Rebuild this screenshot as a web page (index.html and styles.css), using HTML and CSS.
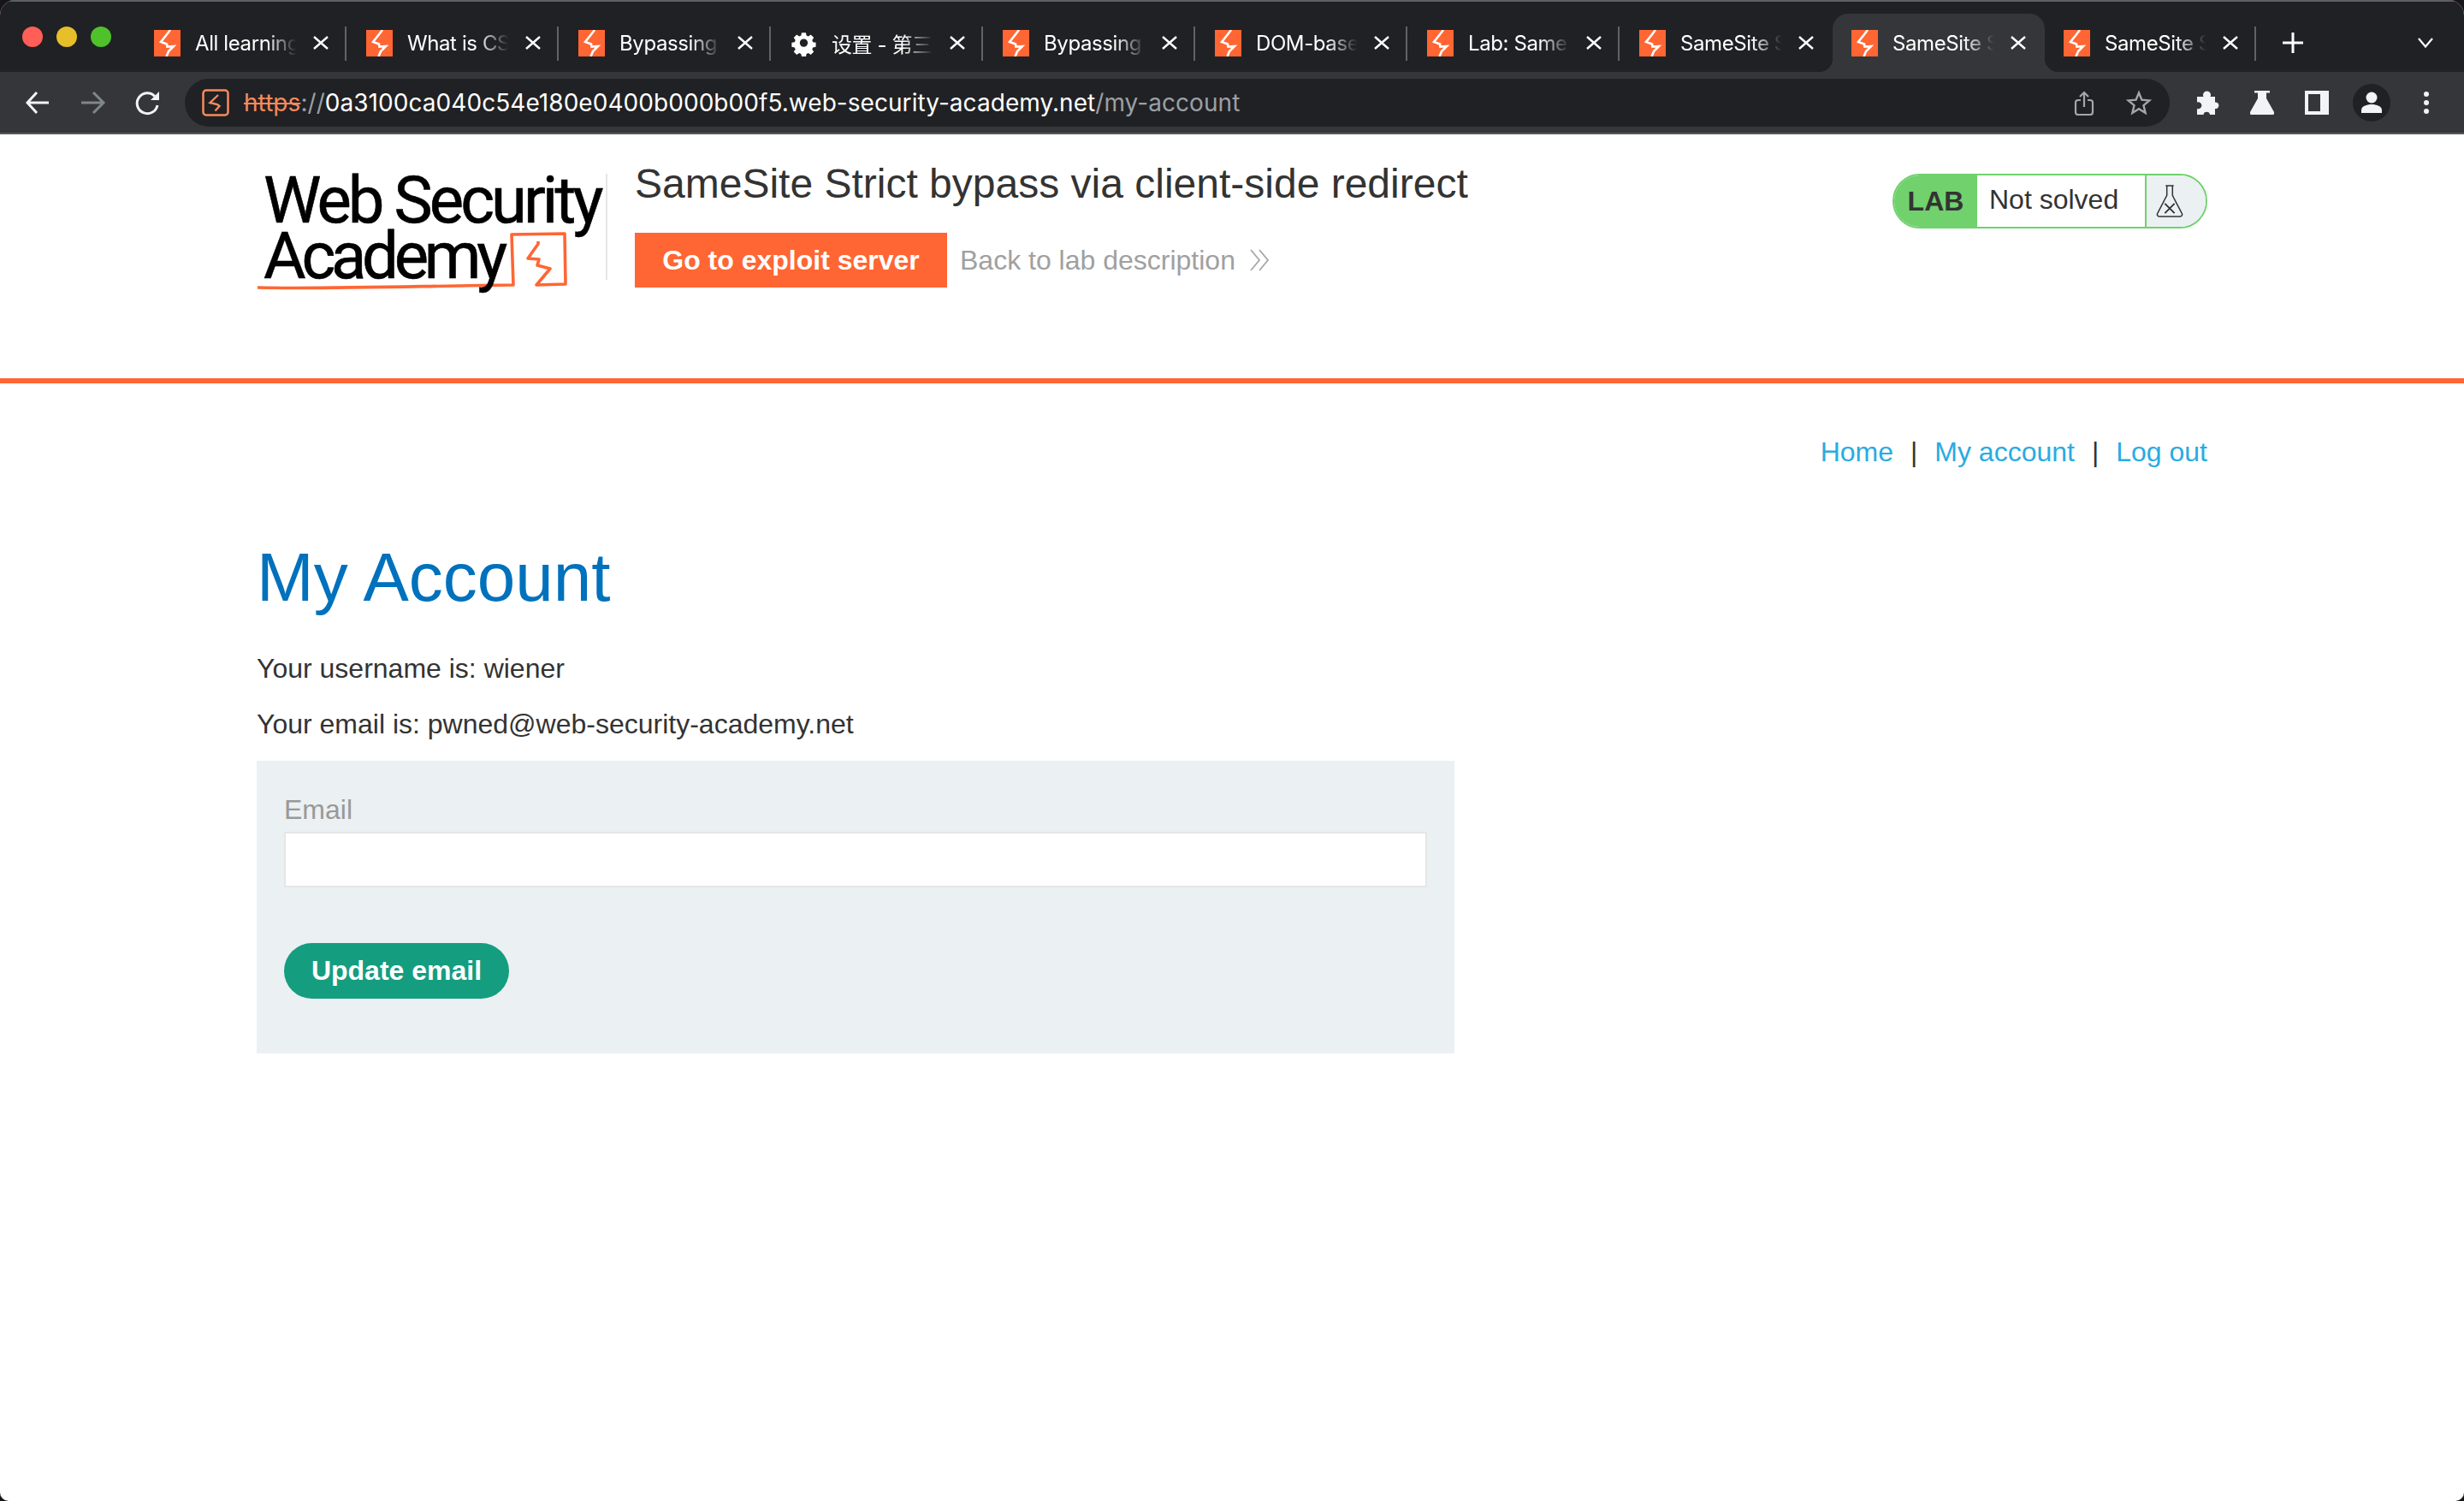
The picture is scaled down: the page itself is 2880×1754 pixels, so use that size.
FILE: index.html
```html
<!DOCTYPE html>
<html lang="en">
<head>
<meta charset="utf-8">
<title>SameSite Strict bypass via client-side redirect</title>
<link rel="stylesheet" href="styles.css">
</head>
<body>
<svg class="defs" width="0" height="0" aria-hidden="true">
  <defs>
    <symbol id="fav" viewBox="0 0 31 31">
      <rect width="31" height="31" fill="#ff6633"/>
      <path d="M19 0 L14 6.500 L8 14 L15 16.500 L15.500 19.500 L23 19 L17 25 L14.500 31" fill="none" stroke="#fff" stroke-width="2.600"/>
    </symbol>
    <symbol id="close" viewBox="0 0 18 18">
      <path d="M1 2 L17 16 M17 2 L1 16" stroke="#fff" stroke-width="2.400" fill="none"/>
    </symbol>
  </defs>
</svg>
<div class="browser">
  <div class="tabstrip">
    <div class="lights"><i class="light red"></i><i class="light yellow"></i><i class="light green"></i></div>
    <div class="tab"><svg class="fav"><use href="#fav"/></svg><span class="tab-title">All learning</span><svg class="x"><use href="#close"/></svg></div>
    <div class="tab"><svg class="fav"><use href="#fav"/></svg><span class="tab-title">What is CS</span><svg class="x"><use href="#close"/></svg></div>
    <div class="tab"><svg class="fav"><use href="#fav"/></svg><span class="tab-title">Bypassing</span><svg class="x"><use href="#close"/></svg></div>
    <div class="tab"><svg class="fav" viewBox="0 0 31 31"><path fill="#fff" fill-rule="evenodd" d="M12.600 2h5.800l.8 4 2.600 1.100 3.400-2.300 4.100 4.100-2.300 3.400 1.100 2.600 4 .8v5.800l-4 .8-1.100 2.600 2.300 3.400-4.100 4.100-3.400-2.300-2.600 1.100-.8 4h-5.800l-.8-4-2.600-1.100-3.400 2.300-4.100-4.100 2.300-3.400-1.100-2.600-4-.8v-5.800l4-.8 1.100-2.600-2.300-3.400 4.100-4.100 3.400 2.300 2.600-1.100zM15.500 10.500a5.500 5.500 0 1 0 0 11 5.500 5.500 0 0 0 0-11z" transform="translate(2.300 1.500) scale(.85)"/></svg><span class="tab-title">设置 - 第三</span><svg class="x"><use href="#close"/></svg></div>
    <div class="tab"><svg class="fav"><use href="#fav"/></svg><span class="tab-title">Bypassing</span><svg class="x"><use href="#close"/></svg></div>
    <div class="tab"><svg class="fav"><use href="#fav"/></svg><span class="tab-title">DOM-base</span><svg class="x"><use href="#close"/></svg></div>
    <div class="tab"><svg class="fav"><use href="#fav"/></svg><span class="tab-title">Lab: Same</span><svg class="x"><use href="#close"/></svg></div>
    <div class="tab before-active"><svg class="fav"><use href="#fav"/></svg><span class="tab-title">SameSite S</span><svg class="x"><use href="#close"/></svg></div>
    <div class="tab active"><svg class="fav"><use href="#fav"/></svg><span class="tab-title">SameSite S</span><svg class="x"><use href="#close"/></svg></div>
    <div class="tab"><svg class="fav"><use href="#fav"/></svg><span class="tab-title">SameSite S</span><svg class="x"><use href="#close"/></svg></div>
    <svg class="plus" viewBox="0 0 24 24"><path d="M12 0v24M0 12h24" stroke="#fff" stroke-width="3" fill="none"/></svg>
    <svg class="chev" viewBox="0 0 18 12"><path d="M1 1 L9 10.500 L17 1" stroke="#fff" stroke-width="2.200" fill="none"/></svg>
  </div>
  <div class="toolbar">
    <svg class="nav-ic" viewBox="0 0 30 30"><path d="M27 15H2M13 3L2 15 13 27" stroke="#f1f3f4" stroke-width="3" fill="none"/></svg>
    <svg class="nav-ic" viewBox="0 0 30 30"><path d="M1 15H26M15 3L27 15 15 27" stroke="#80868b" stroke-width="3" fill="none"/></svg>
    <svg class="nav-ic" viewBox="0 0 30 30"><path d="M23 7.500A12 12 0 1 0 26 18" stroke="#f1f3f4" stroke-width="3" fill="none"/><path d="M28 2V12H18Z" fill="#f1f3f4"/></svg>
    <div class="omnibox">
      <svg class="lock" viewBox="0 0 32 32"><rect x="1.500" y="1.500" width="29" height="29" rx="3.500" fill="none" stroke="#f98a5c" stroke-width="2.500"/><path d="M19 7L9.500 16l8.500 2 2.500 2-5 5.500" fill="none" stroke="#f98a5c" stroke-width="2.400"/></svg>
      <div class="url"><s class="scheme">https</s><span class="dim">://</span><span class="host">0a3100ca040c54e180e0400b000b00f5.web-security-academy.net</span><span class="dim">/my-account</span></div>
      <svg class="omni-ic" viewBox="0 0 30 30"><path d="M11 12H8a3 3 0 0 0-3 3v11a3 3 0 0 0 3 3h14a3 3 0 0 0 3-3V15a3 3 0 0 0-3-3h-3M15 20V3M10 8l5-5 5 5" fill="none" stroke="#a3a6aa" stroke-width="2.200"/></svg>
      <svg class="omni-ic" viewBox="0 0 30 30"><path d="M15 3.500l3.400 8.200 8.900.7-6.800 5.800 2.100 8.700-7.600-4.700-7.600 4.700 2.100-8.700-6.800-5.800 8.900-.7z" fill="none" stroke="#a3a6aa" stroke-width="2.400"/></svg>
    </div>
    <div class="tools">
      <svg class="tool puzzle" viewBox="0 0 28 28"><path fill="#f1f3f4" d="M1 7h7.500a4.500 4.500 0 1 1 8 0H22v6.500a3.800 3.800 0 1 1 0 7.500V28h-6a3.800 3.800 0 0 0-7.500 0H1v-7a4 4 0 1 0 0-7.500z"/></svg>
      <svg class="tool flask" viewBox="0 0 28 28"><path fill="#f1f3f4" d="M5 0H23V2.500H19V9L28 25a2 2 0 0 1-2 3H2a2 2 0 0 1-2-3L9 9V2.500H5z"/></svg>
      <svg class="tool panel" viewBox="0 0 28 28"><path fill="#f1f3f4" fill-rule="evenodd" d="M0 0h28v28H0zM4 4v20h14V4z"/></svg>
      <div class="avatar"><svg viewBox="0 0 44 44"><circle cx="22" cy="16" r="6.500" fill="#f1f3f4"/><path fill="#f1f3f4" d="M10 34v-3c0-5 6-7 12-7s12 2 12 7v3z"/></svg></div>
      <svg class="menu" viewBox="0 0 6 30"><circle cx="3" cy="5" r="3" fill="#f1f3f4"/><circle cx="3" cy="15" r="3" fill="#f1f3f4"/><circle cx="3" cy="25" r="3" fill="#f1f3f4"/></svg>
    </div>
  </div>
</div>
<header class="lab-header">
  <div class="lab-inner">
    <a class="logo">
      <svg class="logo-mark" viewBox="0 0 400 150"><path d="M1 133 C80 135 200 131 300 130 L298 71 L360 70 L361 129 L327 130 L343 111 L328 107 L330 100 L317 99 L329 82 L329 79" fill="none" stroke="#ff6633" stroke-width="3.600" stroke-linejoin="round"/></svg>
      <span class="logo-line">Web Security</span>
      <span class="logo-line second">Academy</span>
    </a>
    <div class="lab-title">
      <h2>SameSite Strict bypass via client-side redirect</h2>
      <div class="lab-links">
        <a class="btn-exploit">Go to exploit server</a>
        <a class="back">Back to lab description <svg class="back-ic" viewBox="0 0 24 26"><path d="M2 1l10 12L2 25M12 1l10 12-10 12" fill="none" stroke="#a6a6a6" stroke-width="1.800"/></svg></a>
      </div>
    </div>
    <div class="status">
      <span class="status-lab">LAB</span>
      <span class="status-text">Not solved</span>
      <span class="status-ic"><svg viewBox="0 0 34 42"><path d="M12 2h10M13.500 2v12L2 36a2.500 2.500 0 0 0 2 4h26a2.500 2.500 0 0 0 2-4L20.500 14V2" fill="none" stroke="#333" stroke-width="1.600"/><path d="M11 24l12 12M23 24L11 36" stroke="#333" stroke-width="2" fill="none"/></svg></span>
    </div>
  </div>
</header>
<main class="page">
  <nav class="site-nav"><a>Home</a><span class="sep">|</span><a>My account</a><span class="sep">|</span><a>Log out</a></nav>
  <h1>My Account</h1>
  <p class="info first">Your username is: wiener</p>
  <p class="info">Your email is: pwned@web-security-academy.net</p>
  <form class="email-form">
    <label for="email">Email</label>
    <input id="email" type="email">
    <button type="button">Update email</button>
  </form>
</main>
</body>
</html>
```
FILE: styles.css
```css
* { box-sizing: border-box; }
html { margin: 0; padding: 0; background: #17151a; }
body { margin: 0; padding: 0; background: #fff; font-family: "Liberation Sans", Arial, sans-serif; color: #333; width: 2880px; height: 1754px; overflow: hidden; border-radius: 18px 18px 10px 10px; }
.defs { display: block; height: 0; }

.browser { background: #202124; border-top: 2px solid #5f6063; }
.tabstrip { height: 82px; display: flex; align-items: flex-end; padding-left: 158px; }
.lights { width: 0; display: flex; gap: 16px; align-self: flex-start; margin-left: -132px; padding-top: 29px; margin-right: 132px; }
.light { flex: none; width: 24px; height: 24px; border-radius: 50%; }
.red { background: #ff5f57; }
.yellow { background: #e6bf29; }
.green { background: #4fc12b; }

.tab { position: relative; width: 248px; height: 68px; flex: none; display: flex; align-items: center; padding: 0 22px 0 22px; color: #fff; font: 24px Inter, "Noto Sans CJK SC", sans-serif; border-radius: 18px 18px 0 0; }
.tab::after { content: ""; position: absolute; right: 1px; top: 15px; height: 40px; width: 2px; background: #5f6368; }
.tab.before-active::after { display: none; }
.tab.active { background: #35363a; }
.tab.active::before, .tab.active::after { content: ""; position: absolute; top: auto; bottom: 0; width: 16px; height: 16px; }
.tab.active::before { left: -16px; background: radial-gradient(circle at 0 0, transparent 16px, #35363a 16.500px); }
.tab.active::after { right: -16px; background: radial-gradient(circle at 100% 0, transparent 16px, #35363a 16.500px); }
.fav { width: 31px; height: 31px; flex: none; margin-right: 17px; }
.tab-title { flex: 1; min-width: 0; white-space: nowrap; letter-spacing: -.4px; -webkit-mask-image: linear-gradient(90deg, #000 66%, transparent 94%); mask-image: linear-gradient(90deg, #000 66%, transparent 94%); }
.x { width: 18px; height: 18px; flex: none; margin-left: 12px; }
.plus { width: 24px; height: 24px; margin: 0 0 22px 30px; flex: none; }
.chev { width: 18px; height: 12px; margin: 0 0 28px 134px; flex: none; }

.toolbar { height: 73px; background: #35363a; border-bottom: 2px solid #56575a; display: flex; align-items: center; padding: 1px 0 0 30px; }
.nav-ic { width: 30px; height: 30px; flex: none; margin-right: 34px; }
.omnibox { flex: none; width: 2320px; height: 56px; margin-left: -6px; border-radius: 28px; background: #202124; display: flex; align-items: center; padding: 0 21px 0 20px; }
.lock { width: 32px; height: 32px; flex: none; margin-right: 17px; }
.url { flex: 1; font: 28px Inter, sans-serif; letter-spacing: .05px; white-space: nowrap; color: #fff; }
.scheme { color: #f98a5c; }
.dim { color: #9aa0a6; }
.omni-ic { width: 30px; height: 30px; flex: none; margin-left: 34px; }
.tools { flex: 1; display: flex; align-items: center; padding-left: 31px; }
.tool { width: 28px; height: 28px; flex: none; }
.puzzle { margin-right: 35px; }
.flask { margin-right: 36px; }
.panel { margin-right: 28px; }
.avatar { width: 44px; height: 44px; flex: none; border-radius: 50%; background: #202124; margin-right: 39px; }
.avatar svg { display: block; width: 44px; height: 44px; }
.menu { width: 6px; height: 30px; flex: none; }

.lab-header { height: 291px; border-bottom: 6px solid #ff6633; }
.lab-inner { display: flex; width: 2280px; margin-left: 300px; align-items: flex-start; }
.logo { position: relative; width: 410px; height: 124px; margin-top: 46px; flex: none; border-right: 2px solid #e6e6e6; display: block; color: #000; font: 400 76px/65px Roboto, sans-serif; letter-spacing: -3.900px; -webkit-text-stroke: .6px #000; }
.logo-line { position: relative; top: -1px; display: block; white-space: nowrap; margin-left: 8px; }
.logo-line.second { letter-spacing: -5.200px; }
.logo-mark { position: absolute; left: 0; top: 0; width: 400px; height: 150px; overflow: visible; }
.lab-title { flex: 1; padding: 0 0 0 32px; }
.lab-title h2 { margin: 28px 0 0; font-size: 48px; line-height: 60px; font-weight: 400; color: #333; }
.lab-links { display: flex; align-items: center; margin-top: 27px; }
.btn-exploit { width: 365px; height: 64px; line-height: 64px; text-align: center; background: #ff6633; color: #fff; font-size: 32px; font-weight: 700; }
.back { display: flex; align-items: center; gap: 16px; margin-left: 15px; color: #a0a0a0; font-size: 32px; }
.back-ic { width: 24px; height: 26px; }
.status { flex: none; display: flex; width: 368px; height: 64px; margin-top: 46px; border: 2px solid #70d16d; border-radius: 32px; overflow: hidden; font-size: 32px; }
.status-lab { width: 97px; background: #70d16d; font-weight: 700; text-align: center; line-height: 60px; }
.status-text { width: 196px; padding-left: 14px; line-height: 56px; }
.status-ic { flex: 1; background: #ebf0f2; border-left: 2px solid #70d16d; display: flex; align-items: center; padding-left: 11px; }
.status-ic svg { width: 32px; height: 40px; }

.page { padding: 0 300px; font-size: 32px; line-height: 46px; }
.site-nav { display: flex; justify-content: flex-end; margin-top: 57px; color: #29abe2; }
.sep { color: #333; margin: 0 20px; }
h1 { margin: 74px 0 0; font-size: 80px; line-height: 100px; font-weight: 400; color: #0071bc; }
.info { margin: 19px 0 0; color: #333; }
.info.first { margin-top: 33px; }
.email-form { display: block; width: 1400px; height: 342px; margin-top: 20px; background: #ebf0f2; padding: 34px 32px 0; }
.email-form label { display: block; color: #999; line-height: 46px; }
.email-form input { display: block; width: 100%; height: 65px; margin-top: 3px; border: 2px solid #e6e6e6; background: #fff; outline: 0; }
.email-form button { display: block; width: 263px; height: 65px; margin-top: 65px; border: 0; border-radius: 33px; background: #159d80; color: #fff; font: 700 32px "Liberation Sans", sans-serif; }
```
